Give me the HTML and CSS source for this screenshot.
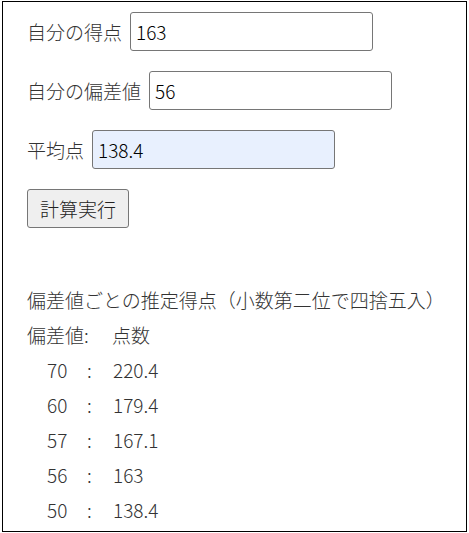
FILE: index.html
```html
<!DOCTYPE html>
<html lang="ja">
<head>
    <meta charset="UTF-8">
    <meta name="viewport" content="width=device-width, initial-scale=1.0">
    <title>偏差値計算</title>
    <link rel="stylesheet" href="styles.css">
</head>
<body>
    <div class="page">
        <div class="form">
            <div class="field">
                <label for="my-score">自分の得点</label>
                <input type="text" id="my-score" value="163">
            </div>
            <div class="field">
                <label for="my-dev">自分の偏差値</label>
                <input type="text" id="my-dev" value="56">
            </div>
            <div class="field">
                <label for="average">平均点</label>
                <input type="text" id="average" class="filled" value="138.4">
            </div>
            <div class="field">
                <button type="button">計算実行</button>
            </div>
        </div>

        <div class="result">
            <div class="title">偏差値ごとの推定得点（小数第二位で四捨五入）</div>
            <div class="head">
                <span class="head-dev">偏差値:</span>
                <span>点数</span>
            </div>
            <div class="row"><span class="dev">70</span><span class="colon">:</span><span>220.4</span></div>
            <div class="row"><span class="dev">60</span><span class="colon">:</span><span>179.4</span></div>
            <div class="row"><span class="dev">57</span><span class="colon">:</span><span>167.1</span></div>
            <div class="row"><span class="dev">56</span><span class="colon">:</span><span>163</span></div>
            <div class="row"><span class="dev">50</span><span class="colon">:</span><span>138.4</span></div>
        </div>
    </div>
</body>
</html>
```

FILE: styles.css
```css
body {
    margin: 0;
    font-family: "Noto Sans CJK JP", "Noto Sans", sans-serif;
    font-size: 19px;
    font-weight: 300;
    color: #333;
    background-color: #fff;
}
.page {
    box-sizing: border-box;
    width: 465px;
    height: 531px;
    margin: 1px 0 0 2px;
    border: 1px solid #000;
    padding: 10px 0 0 24px;
}
.form {
    display: flex;
    flex-direction: column;
    gap: 20px;
}
.field {
    display: flex;
    align-items: center;
    gap: 8px;
    height: 39px;
}
.field label {
    line-height: 39px;
}
.field input {
    box-sizing: border-box;
    width: 243px;
    height: 39px;
    padding: 0 5px;
    font-family: inherit;
    font-size: 19px;
    font-weight: 300;
    color: #000;
    border: 1px solid #767676;
    border-radius: 3px;
    background-color: #fff;
}
.field input.filled {
    background-color: #e8f0fe;
}
.field button {
    box-sizing: border-box;
    height: 39px;
    padding: 0 12px;
    font-family: inherit;
    font-size: 19px;
    font-weight: 300;
    color: #222;
    background-color: #efefef;
    border: 1px solid #767676;
    border-radius: 3px;
}
.result {
    margin-top: 54px;
    line-height: 35px;
}
.head {
    display: flex;
}
.head-dev {
    width: 85px;
}
.row {
    display: flex;
    padding-left: 20px;
}
.row .dev {
    width: 40px;
}
.row .colon {
    width: 26px;
}
```
